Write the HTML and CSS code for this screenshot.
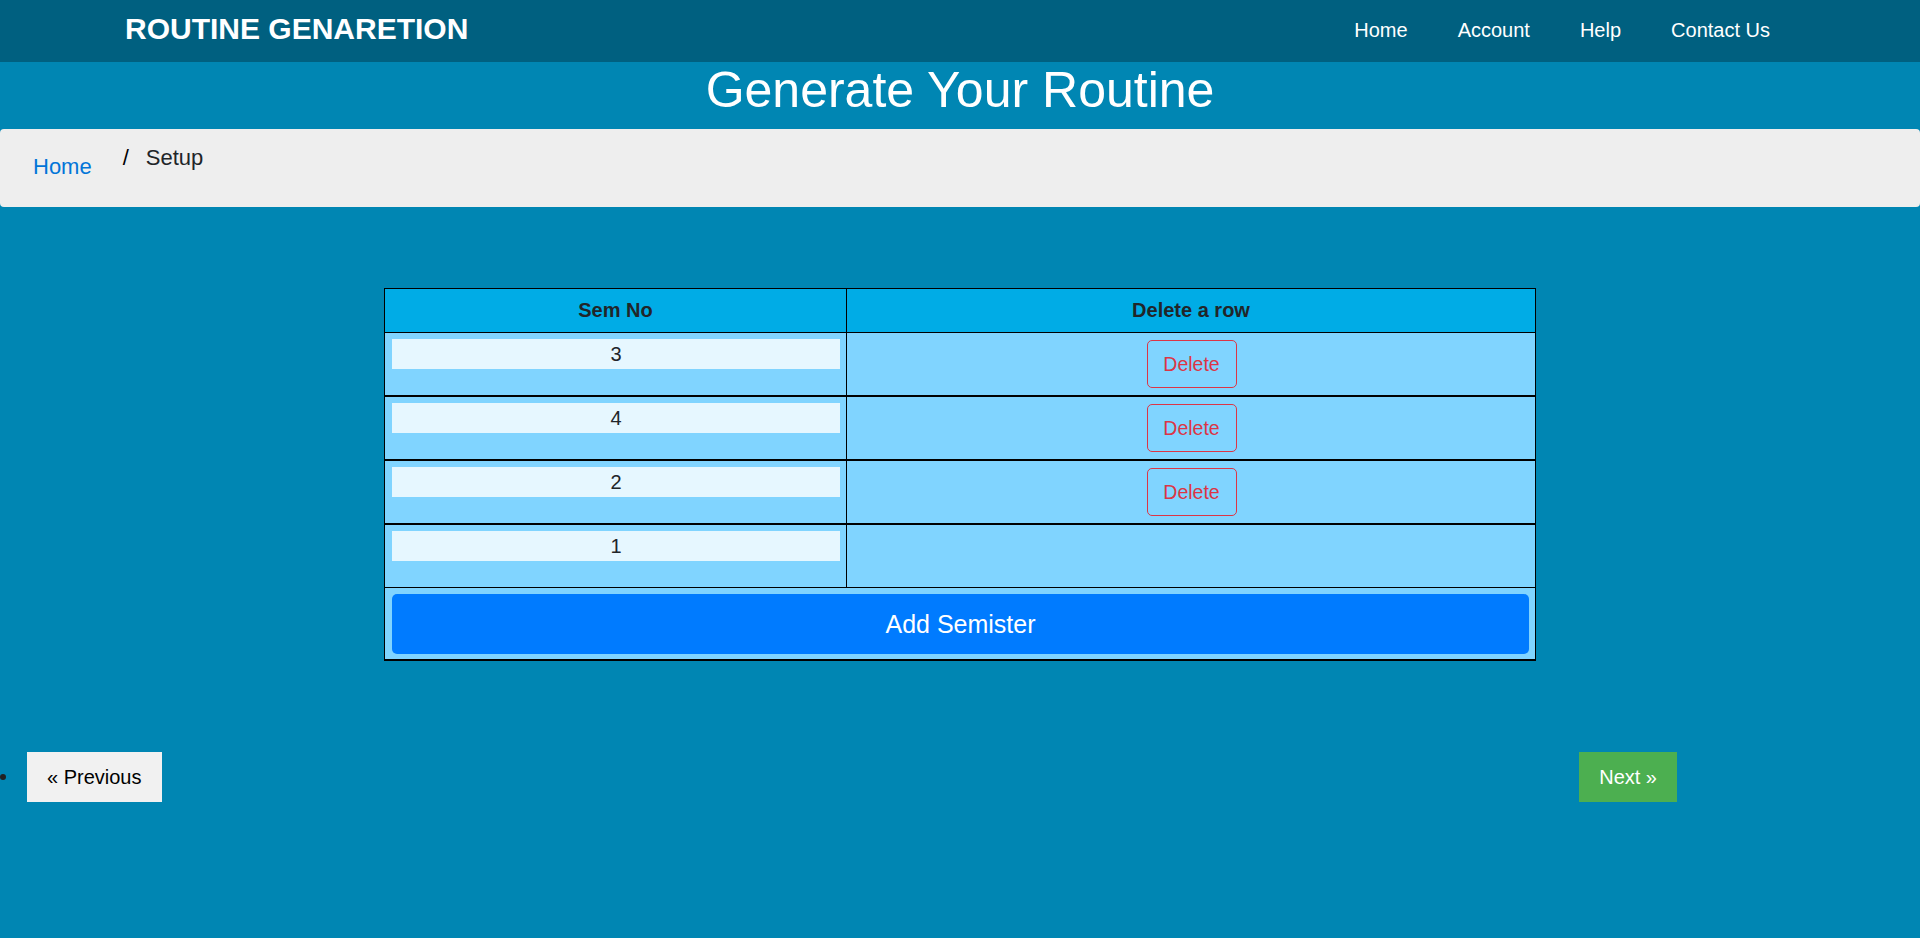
FILE: index.html
```html
<!DOCTYPE html>
<html lang="en">
<head>
<meta charset="utf-8">
<title>Routine Genaretion</title>
<link rel="stylesheet" href="styles.css">
</head>
<body>
<header class="topbar">
  <div class="brand">ROUTINE GENARETION</div>
  <nav class="nav">
    <a href="#">Home</a>
    <a href="#">Account</a>
    <a href="#">Help</a>
    <a href="#">Contact Us</a>
  </nav>
</header>

<h1 class="page-title">Generate Your Routine</h1>

<ol class="breadcrumb">
  <li class="crumb-home"><a href="#">Home</a></li>
  <li class="crumb-current"><span class="sep">/</span>Setup</li>
</ol>

<main class="table-wrap">
  <table class="sem-table">
    <colgroup>
      <col class="col-sem">
      <col class="col-del">
    </colgroup>
    <thead>
      <tr>
        <th class="cell-sem">Sem No</th>
        <th class="cell-del">Delete a row</th>
      </tr>
    </thead>
    <tbody>
      <tr class="row-added">
        <td class="cell-sem"><input class="sem-input" type="text" value="3"></td>
        <td class="cell-del"><button class="btn-delete">Delete</button></td>
      </tr>
      <tr class="row-added">
        <td class="cell-sem"><input class="sem-input" type="text" value="4"></td>
        <td class="cell-del"><button class="btn-delete">Delete</button></td>
      </tr>
      <tr class="row-added">
        <td class="cell-sem"><input class="sem-input" type="text" value="2"></td>
        <td class="cell-del"><button class="btn-delete">Delete</button></td>
      </tr>
      <tr class="row-base">
        <td class="cell-sem"><input class="sem-input" type="text" value="1"></td>
        <td class="cell-del"><div class="spacer"></div></td>
      </tr>
      <tr class="row-add">
        <td class="cell-add" colspan="2"><button class="btn-add">Add Semister</button></td>
      </tr>
    </tbody>
  </table>
</main>

<ul class="pager">
  <li class="pager-item pager-first"><a class="pager-prev" href="#">&laquo; Previous</a></li>
  <li class="pager-item pager-last"><a class="pager-next" href="#">Next &raquo;</a></li>
</ul>
</body>
</html>
```

FILE: styles.css
```css
* {
  box-sizing: border-box;
}

body {
  margin: 0;
  background: #0086b3;
  font-family: "Liberation Sans", Arial, sans-serif;
  color: #212529;
  min-height: 938px;
}

/* Top bar */
.topbar {
  display: flex;
  justify-content: space-between;
  align-items: flex-start;
  height: 62px;
  padding: 0 125px;
  background: #006080;
}

.brand {
  padding-top: 12px;
  font-size: 30px;
  font-weight: bold;
  color: #ffffff;
  line-height: normal;
}

.nav {
  display: flex;
}

.nav a {
  padding: 19px 25px 0;
  font-size: 20px;
  line-height: normal;
  color: #ffffff;
  text-decoration: none;
}

/* Page title */
.page-title {
  margin: 0 0 11px;
  font-size: 50px;
  line-height: 56px;
  font-weight: normal;
  text-align: center;
  color: #ffffff;
}

/* Breadcrumb */
.breadcrumb {
  display: flex;
  align-items: flex-start;
  height: 78px;
  margin: 0 0 81px;
  padding: 0 0 0 33px;
  list-style: none;
  background: #eeeeee;
  border-radius: 4px;
  font-size: 22px;
  line-height: 24px;
}

.crumb-home {
  padding-top: 26px;
}

.crumb-home a {
  color: #0275d8;
  text-decoration: none;
}

.crumb-current {
  padding-top: 17px;
  margin-left: 31px;
  color: #212529;
}

.sep {
  margin-right: 17px;
  color: #000000;
}

/* Table */
.table-wrap {
  display: block;
}

.sem-table {
  width: 1152px;
  margin: 0 auto;
  table-layout: fixed;
  border-collapse: separate;
  border-spacing: 0;
  border: 1px solid #000000;
  border-bottom-width: 2px;
  background: #80d4ff;
}

.col-sem {
  width: 462px;
}

.sem-table th {
  height: 44px;
  padding: 0;
  line-height: 43px;
  font-size: 20px;
  font-weight: bold;
  text-align: center;
  color: #212529;
  background: #00ace6;
  border-bottom: 1px solid #000000;
}

.sem-table th.cell-sem,
.sem-table td.cell-sem {
  border-right: 1px solid #000000;
}

.sem-table td {
  padding: 6px 6px 7px 7px;
  vertical-align: top;
  text-align: center;
}

.row-added td {
  border-bottom: 2px solid #000000;
}

.row-base td {
  border-bottom: 1px solid #000000;
}

.sem-input {
  display: block;
  width: 100%;
  height: 30px;
  margin: 0;
  padding: 0;
  border: none;
  outline: none;
  background: #e6f7ff;
  font-family: "Liberation Sans", Arial, sans-serif;
  font-size: 20px;
  text-align: center;
  color: #212529;
}

.btn-delete {
  width: 90px;
  height: 48px;
  margin-top: 1px;
  padding: 0;
  border: 1px solid #dc3545;
  border-radius: 5px;
  background: transparent;
  font-family: "Liberation Sans", Arial, sans-serif;
  font-size: 19.5px;
  color: #dc3545;
  vertical-align: top;
}

.spacer {
  height: 49px;
}

.sem-table td.cell-add {
  padding: 6px 6px 5px 7px;
}

.btn-add {
  display: block;
  width: 100%;
  height: 60px;
  padding: 0;
  border: none;
  border-radius: 5px;
  background: #007bff;
  font-family: "Liberation Sans", Arial, sans-serif;
  font-size: 25px;
  color: #ffffff;
}

/* Pager */
.pager {
  display: flex;
  align-items: center;
  margin: 91px 0 0;
  padding: 0 243px 0 0;
  list-style: none;
}

.pager-item {
  display: flex;
  align-items: center;
}

.pager-first::before {
  content: "";
  width: 6px;
  height: 6px;
  border-radius: 50%;
  background: #222222;
  margin-right: 21px;
}

.pager-last {
  margin-left: auto;
}

.pager-prev,
.pager-next {
  display: block;
  height: 50px;
  line-height: 50px;
  font-size: 20px;
  text-decoration: none;
}

.pager-prev {
  padding: 0 20px;
  background: #f1f1f1;
  color: #000000;
}

.pager-next {
  padding: 0 20px;
  background: #4caf50;
  color: #ffffff;
}
```
